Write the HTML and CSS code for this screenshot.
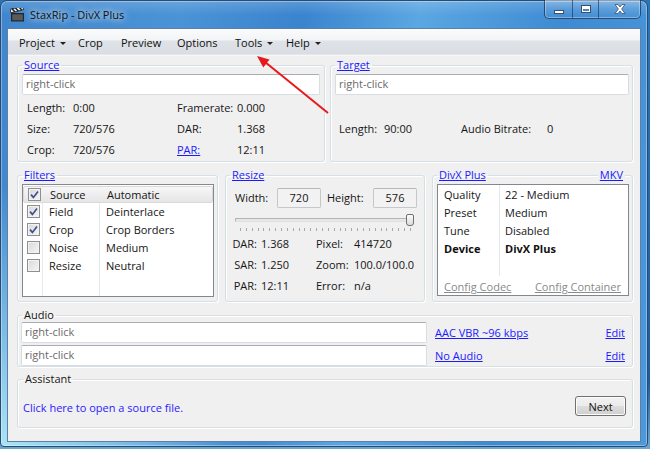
FILE: index.html
```html
<!DOCTYPE html>
<html>
<head>
<meta charset="utf-8">
<title>StaxRip - DivX Plus</title>
<link rel="stylesheet" href="styles.css">
</head>
<body>
<div class="window">
  <div class="titlebar">
    <svg class="app-icon" width="15" height="14" viewBox="0 0 15 14">
      <rect x="1" y="5" width="13" height="8.5" fill="#262626"/>
      <rect x="2.2" y="6.3" width="10.6" height="6" fill="#5a5a5a"/>
      <g transform="rotate(-14 1 5)">
        <rect x="1" y="1.2" width="13" height="3.6" fill="#f4f4f4" stroke="#1e1e1e" stroke-width="0.8"/>
        <path d="M3 1.2 L5 4.8 M6.6 1.2 L8.6 4.8 M10.2 1.2 L12.2 4.8" stroke="#1e1e1e" stroke-width="1.5"/>
      </g>
    </svg>
    <span class="title">StaxRip - DivX Plus</span>
    <div class="caption">
      <div class="cap cap-min"><span class="glyph-min"></span></div>
      <div class="cap cap-max"><span class="glyph-max"></span></div>
      <div class="cap cap-close">
        <svg width="12" height="10" viewBox="0 0 12 10"><path d="M1 0.5 H4 L6 3 L8 0.5 H11 L7.6 5 L11 9.5 H8 L6 7 L4 9.5 H1 L4.4 5 Z" fill="#fff" stroke="#3b4f6b" stroke-width="0.8"/></svg>
      </div>
    </div>
  </div>
  <div class="client">
    <div class="menubar">
      <span class="menu-item">Project<i class="caret"></i></span>
      <span class="menu-item">Crop</span>
      <span class="menu-item">Preview</span>
      <span class="menu-item">Options</span>
      <span class="menu-item">Tools<i class="caret"></i></span>
      <span class="menu-item">Help<i class="caret"></i></span>
    </div>
    <div class="content">
      <div class="row-top">
        <fieldset class="group">
          <legend><a class="link">Source</a></legend>
          <div class="textbox">right-click</div>
          <div class="info info-source">
            <span>Length:</span><span>0:00</span><span>Framerate:</span><span>0.000</span>
            <span>Size:</span><span>720/576</span><span>DAR:</span><span>1.368</span>
            <span>Crop:</span><span>720/576</span><a class="link">PAR:</a><span>12:11</span>
          </div>
        </fieldset>
        <fieldset class="group">
          <legend><a class="link">Target</a></legend>
          <div class="textbox">right-click</div>
          <div class="info info-target">
            <span>Length:</span><span>90:00</span><span>Audio Bitrate:</span><span>0</span>
          </div>
        </fieldset>
      </div>

      <div class="row-mid">
        <fieldset class="group">
          <legend><a class="link">Filters</a></legend>
          <div class="listview">
            <div class="lv-row selected"><span class="cb"><svg width="11" height="11" viewBox="0 0 11 11"><path d="M2 5.6 L4.4 8.4 L9 2.4" fill="none" stroke="#3d5192" stroke-width="1.7"/></svg></span><span>Source</span><span>Automatic</span></div>
            <div class="lv-row"><span class="cb"><svg width="11" height="11" viewBox="0 0 11 11"><path d="M2 5.6 L4.4 8.4 L9 2.4" fill="none" stroke="#3d5192" stroke-width="1.7"/></svg></span><span>Field</span><span>Deinterlace</span></div>
            <div class="lv-row"><span class="cb"><svg width="11" height="11" viewBox="0 0 11 11"><path d="M2 5.6 L4.4 8.4 L9 2.4" fill="none" stroke="#3d5192" stroke-width="1.7"/></svg></span><span>Crop</span><span>Crop Borders</span></div>
            <div class="lv-row"><span class="cb"></span><span>Noise</span><span>Medium</span></div>
            <div class="lv-row"><span class="cb"></span><span>Resize</span><span>Neutral</span></div>
          </div>
        </fieldset>

        <fieldset class="group resize">
          <legend><a class="link">Resize</a></legend>
          <div class="dims">
            <span>Width:</span><span class="numbox">720</span>
            <span>Height:</span><span class="numbox">576</span>
          </div>
          <div class="slider">
            <div class="slider-line"><div class="track"></div><div class="thumb"></div></div>
            <div class="ticks"></div>
          </div>
          <div class="info info-resize">
            <span class="r">DAR:</span><span>1.368</span><span>Pixel:</span><span>414720</span>
            <span class="r">SAR:</span><span>1.250</span><span>Zoom:</span><span>100.0/100.0</span>
            <span class="r">PAR:</span><span>12:11</span><span>Error:</span><span>n/a</span>
          </div>
        </fieldset>

        <fieldset class="group divx">
          <legend><a class="link">DivX Plus</a></legend>
          <a class="link mkv">MKV</a>
          <div class="listbox">
            <div class="kv">
              <div class="kv-keys"><span>Quality</span><span>Preset</span><span>Tune</span><b>Device</b></div>
              <div class="kv-vals"><span>22 - Medium</span><span>Medium</span><span>Disabled</span><b>DivX Plus</b></div>
            </div>
            <div class="config"><a class="cfg">Config Codec</a><a class="cfg">Config Container</a></div>
          </div>
        </fieldset>
      </div>

      <fieldset class="group audio">
        <legend>Audio</legend>
        <div class="audio-grid">
          <div class="textbox">right-click</div><a class="link">AAC VBR ~96 kbps</a><a class="link">Edit</a>
          <div class="textbox">right-click</div><a class="link">No Audio</a><a class="link">Edit</a>
        </div>
      </fieldset>

      <fieldset class="group assistant">
        <legend>Assistant</legend>
        <div class="assist-row">
          <a class="assist-link">Click here to open a source file.</a>
          <button class="btn">Next</button>
        </div>
      </fieldset>
    </div>
  </div>
</div>
<svg class="annotation" width="650" height="449" viewBox="0 0 650 449">
  <line x1="328" y1="113" x2="265" y2="62" stroke="#e8191b" stroke-width="2"/>
  <polygon points="257,56 269.5,59.6 263.3,67.4" fill="#e8191b"/>
</svg>
</body>
</html>
```
FILE: styles.css
```css
* { box-sizing: border-box; }
html, body { margin: 0; padding: 0; }
body {
  width: 650px; height: 449px; overflow: hidden; position: relative;
  background: linear-gradient(to bottom, #2a74b8, #1d5c9a 85%, #6aa8d0);
  font-family: "Open Sans", "Noto Sans", sans-serif;
  font-size: 11px; color: #151515;
}
.window {
  width: 648px; height: 447px;
  border: 1px solid #274b74;
  border-radius: 7px 7px 4px 4px;
  padding: 0 6px 4px;
  display: flex; flex-direction: column;
  background:
    linear-gradient(to bottom, rgba(255,255,255,0.16) 0, rgba(255,255,255,0) 14px),
    radial-gradient(circle at 0 100%, rgba(175,232,246,0.95) 0, rgba(175,232,246,0) 260px),
    linear-gradient(100deg, #3f86cd 0%, #4b93d6 25%, #3a84ce 42%, #5ba7e2 58%, #3f8bd3 78%, #4c99dc 100%);
  box-shadow: inset 0 0 0 1px rgba(255,255,255,0.35);
}
.titlebar { height: 27px; display: flex; align-items: center; padding-left: 3px; }
.app-icon { flex: none; }
.title {
  margin-left: 5px; font-size: 11px; color: #111;
  text-shadow: 0 0 6px rgba(255,255,255,0.9), 0 0 10px rgba(255,255,255,0.6);
}
.caption {
  margin-left: auto; align-self: flex-start; margin-top: -1px;
  display: flex; height: 19px;
  border: 1px solid rgba(25,45,75,0.75); border-top: none;
  border-radius: 0 0 5px 5px; overflow: hidden;
  background: linear-gradient(to bottom, rgba(255,255,255,0.25), rgba(255,255,255,0.08) 50%, rgba(255,255,255,0.02));
  box-shadow: inset 0 0 0 1px rgba(255,255,255,0.3);
}
.cap { display: flex; align-items: center; justify-content: center; border-left: 1px solid rgba(25,45,75,0.6); }
.cap-min { width: 27px; border-left: none; }
.cap-max { width: 26px; }
.cap-close { width: 42px; }
.glyph-min { width: 10px; height: 4px; background: #fff; border: 1px solid #3b4f6b; margin-top: 5px; }
.glyph-max { width: 10px; height: 8px; border: 1px solid #3b4f6b; box-shadow: inset 0 0 0 1px #fff, inset 0 2px 0 1px #fff; background: rgba(80,110,150,0.5); }

.client {
  flex: 1; display: flex; flex-direction: column;
  border: 1px solid #5f7fa6; background: #f0f0f0; overflow: hidden;
}
.menubar {
  height: 27px; flex: none; display: flex; align-items: center; padding-left: 4px;
  background: linear-gradient(to bottom, #fbfbfc 0, #f2f4f6 11px, #dfe3e8 12px, #dadee4 25px, #eef0f2 26px);
  border-bottom: 1px solid #f7f7f7;
}
.menu-item { padding: 0 0 0 7px; display: flex; align-items: center; color: #111; flex: none; }
.menu-item:nth-child(1) { width: 59px; }
.menu-item:nth-child(2) { width: 43px; }
.menu-item:nth-child(3) { width: 56px; }
.menu-item:nth-child(4) { width: 58px; }
.menu-item:nth-child(5) { width: 51px; }
.caret {
  display: inline-block; width: 0; height: 0; margin-left: 5px; margin-top: 2px;
  border-left: 3px solid transparent; border-right: 3px solid transparent; border-top: 3px solid #222;
}

.content { padding: 2px 7px 0 9px; }
.link { color: #1a1aff; text-decoration: underline; cursor: pointer; }

.group {
  margin: 0; min-width: 0;
  padding: 0 4px 1px 4px;
  border: 1px solid #d5dfe5; border-radius: 3px;
  box-shadow: inset 1px 1px 0 #fff, 1px 1px 0 #fff;
}
.group legend { padding: 0 2px; margin-left: 0; line-height: 14px; height: 14px; }

.textbox {
  height: 21px; background: #fff; color: #6a6a6a;
  border: 1px solid #d8dde4; border-top-color: #abadb3; border-radius: 2px;
  padding-left: 3px; line-height: 18px;
}
.row-top { display: grid; grid-template-columns: 308px 303px; column-gap: 5px; }
.row-top .textbox { margin-top: 2px; }
.info { display: grid; grid-template-rows: repeat(3, 21px); align-items: center; }
.info-source { margin-top: 2px; padding-left: 5px; grid-template-columns: 46px 104px 60px 1fr; }
.info-target { margin-top: 23px; grid-template-rows: 21px; padding-left: 4px; grid-template-columns: 45px 77px 86px 1fr; }
.row-top .group:last-child { padding-right: 3px; }

.row-mid { margin-top: 6px; display: grid; grid-template-columns: 201px 200px 201px; column-gap: 7px; }
.row-mid .group { padding: 2px 3px 4px 4px; }
.listview {
  height: 113px; border: 1px solid #828790; background:
    linear-gradient(#e4e9f0, #e4e9f0) 19px 0 / 1px 100% no-repeat,
    linear-gradient(#e4e9f0, #e4e9f0) 76px 0 / 1px 100% no-repeat,
    #fff;
}
.lv-row {
  height: 18px; display: grid; grid-template-columns: 20px 57px 1fr; align-items: center;
}
.lv-row > span:nth-child(2) { padding-left: 6px; }
.lv-row > span:nth-child(3) { padding-left: 6px; }
.lv-row.selected {
  margin: 1px 0 -1px;
  background: linear-gradient(to bottom, #f7f7f7, #e5e5e5);
  border: 1px solid #d9d9d9; border-radius: 2px;
  height: 17px;
}
.cb {
  width: 13px; height: 13px; margin-left: 4px;
  border: 1px solid #8f8f8f;
  background: linear-gradient(135deg, #d8d8d8, #f6f6f6);
  box-shadow: inset 0 0 0 1px #f2f2f2;
  display: flex; align-items: center; justify-content: center;
}
.cb svg { display: block; }

.resize .dims {
  margin-top: 3px; height: 21px; padding-left: 5px;
  display: grid; grid-template-columns: 42px 50px 46px 44px; align-items: center;
}
.numbox {
  width: 44px; height: 20px; text-align: center; line-height: 18px;
  border: 1px solid #c5c7cc; border-top-color: #b5b7bd; border-radius: 2px; background: #f2f2f2;
}
.slider { height: 25px; margin-left: 5px; margin-right: 7px; padding-top: 6px; }
.slider-line { display: flex; align-items: center; height: 12px; }
.track {
  flex: 1; height: 4px; border: 1px solid #b3b3b3; border-bottom-color: #e0e0e0;
  background: #e7e7e7; border-radius: 1px; margin-right: -5px;
}
.thumb {
  width: 8px; height: 12px; border: 1px solid #707070; border-radius: 2px 2px 3px 3px;
  background: linear-gradient(to bottom, #fbfbfb, #dcdcdc);
}
.ticks {
  margin-top: 2px; margin-left: 5px; margin-right: 3px; height: 3px;
  background: repeating-linear-gradient(to right, #a8a8a8 0 1px, transparent 1px 5.86px);
}
.info-resize { grid-template-columns: 27px 59px 38px 1fr; }
.info-resize .r { text-align: right; }
.info-resize > span:nth-child(4n+2) { padding-left: 4px; }

.divx { position: relative; }
.mkv { position: absolute; top: -14px; right: 7px; padding: 0 2px; line-height: 14px; background: #f0f0f0; }
.listbox { height: 112px; border: 1px solid #828790; background: #fff; display: flex; flex-direction: column; }
.kv { display: flex; height: 91px; }
.kv-keys, .kv-vals { display: flex; flex-direction: column; padding-top: 1px; }
.kv-keys { width: 62px; padding-left: 6px; border-right: 1px solid #e4e9f0; }
.kv-vals { padding-left: 5px; }
.kv span, .kv b { line-height: 18px; height: 18px; }
.kv b { font-weight: 700; color: #111; }
.config { display: flex; justify-content: space-between; padding: 3px 7px 0 6px; }
.cfg { color: #8a8a8a; text-decoration: underline; }

.audio { margin-top: 6px; padding: 0 7px 0 3px; }
.audio legend { margin-left: 1px; }
.audio-grid {
  display: grid; grid-template-columns: 406px 1fr auto; grid-template-rows: 21px 21px;
  row-gap: 2px; column-gap: 8px; align-items: center;
}
.assistant { margin-top: 5px; padding: 0 6px 11px 5px; }
.assist-row { display: flex; align-items: flex-end; justify-content: space-between; padding-top: 10px; }
.assist-link { color: #2a22ff; margin-bottom: 1px; cursor: pointer; }
.btn {
  width: 51px; height: 20px; padding: 0; margin: 0;
  font-family: inherit; font-size: 11px; color: #111;
  border: 1px solid #707070; border-radius: 3px;
  background: linear-gradient(to bottom, #f2f2f2 0, #ebebeb 50%, #dddddd 51%, #cfcfcf 100%);
  box-shadow: inset 0 0 0 1px #fcfcfc;
}
.annotation { position: absolute; left: 0; top: 0; pointer-events: none; }
```
